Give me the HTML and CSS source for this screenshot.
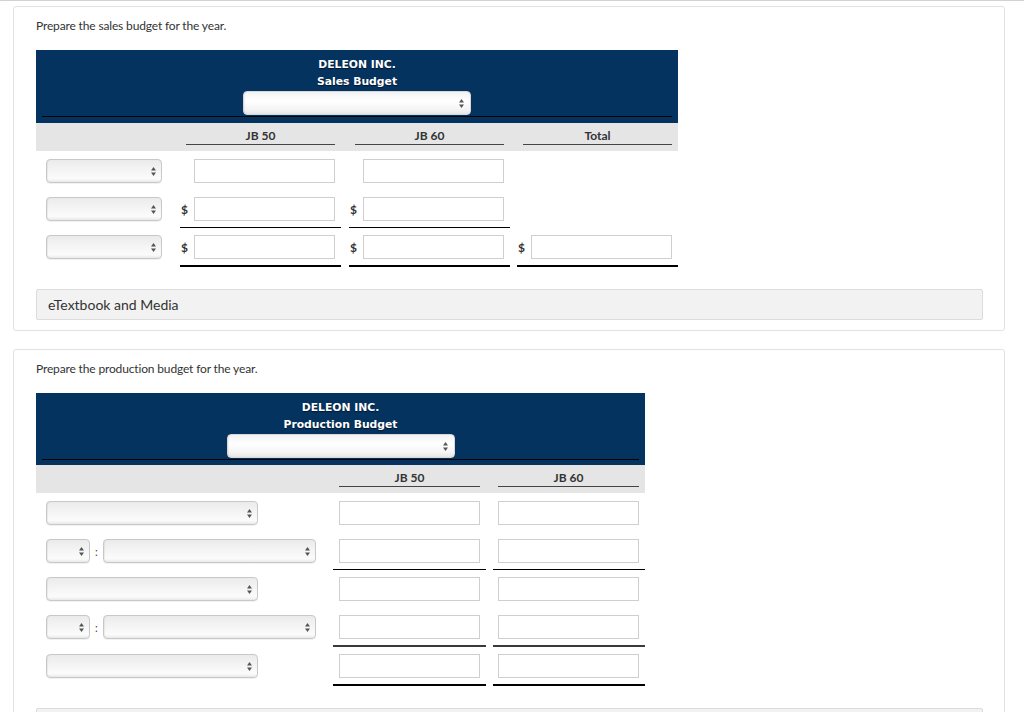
FILE: index.html
```html
<!DOCTYPE html>
<html>
<head>
<meta charset="utf-8">
<link rel="stylesheet" href="styles.css">
</head>
<body>
<div class="card">
  <p class="prompt">Prepare the sales budget for the year.</p>
  <div class="budget sales">
    <div class="bhead">
      <div class="title">DELEON INC.<br>Sales Budget</div>
      <div class="hsel-wrap">
        <div class="sel hsel"><svg class="arr" width="5" height="9" viewBox="0 0 5 9"><polygon points="0,3.6 2.5,0 5,3.6"/><polygon points="0,5.4 2.5,9 5,5.4"/></svg></div>
      </div>
    </div>
    <div class="colrow scols">
      <div></div>
      <div class="lab">JB 50</div>
      <div class="lab">JB 60</div>
      <div class="lab">Total</div>
    </div>
    <div class="brow scols first">
      <div class="selcell"><div class="sel ssel"><svg class="arr" width="5" height="9" viewBox="0 0 5 9"><polygon points="0,3.6 2.5,0 5,3.6"/><polygon points="0,5.4 2.5,9 5,5.4"/></svg></div></div>
      <div class="c"><span class="dollar"></span><div class="inp"></div></div>
      <div class="c"><span class="dollar"></span><div class="inp"></div></div>
      <div></div>
    </div>
    <div class="brow scols">
      <div class="selcell"><div class="sel ssel"><svg class="arr" width="5" height="9" viewBox="0 0 5 9"><polygon points="0,3.6 2.5,0 5,3.6"/><polygon points="0,5.4 2.5,9 5,5.4"/></svg></div></div>
      <div class="c line"><span class="dollar">$</span><div class="inp"></div></div>
      <div class="c line"><span class="dollar">$</span><div class="inp"></div></div>
      <div></div>
    </div>
    <div class="brow scols">
      <div class="selcell"><div class="sel ssel"><svg class="arr" width="5" height="9" viewBox="0 0 5 9"><polygon points="0,3.6 2.5,0 5,3.6"/><polygon points="0,5.4 2.5,9 5,5.4"/></svg></div></div>
      <div class="c thick"><span class="dollar">$</span><div class="inp"></div></div>
      <div class="c thick"><span class="dollar">$</span><div class="inp"></div></div>
      <div class="c thick"><span class="dollar">$</span><div class="inp"></div></div>
    </div>
  </div>
  <div class="media">eTextbook and Media</div>
</div>

<div class="card">
  <p class="prompt">Prepare the production budget for the year.</p>
  <div class="budget prod">
    <div class="bhead">
      <div class="title">DELEON INC.<br>Production Budget</div>
      <div class="hsel-wrap">
        <div class="sel hsel"><svg class="arr" width="5" height="9" viewBox="0 0 5 9"><polygon points="0,3.6 2.5,0 5,3.6"/><polygon points="0,5.4 2.5,9 5,5.4"/></svg></div>
      </div>
    </div>
    <div class="colrow pcols">
      <div></div>
      <div class="lab">JB 50</div>
      <div class="lab">JB 60</div>
    </div>
    <div class="brow pcols first">
      <div class="selcell"><div class="sel wsel"><svg class="arr" width="5" height="9" viewBox="0 0 5 9"><polygon points="0,3.6 2.5,0 5,3.6"/><polygon points="0,5.4 2.5,9 5,5.4"/></svg></div></div>
      <div class="c"><div class="inp"></div></div>
      <div class="c"><div class="inp"></div></div>
    </div>
    <div class="brow pcols">
      <div class="selcell"><div class="sel tsel"><svg class="arr" width="5" height="9" viewBox="0 0 5 9"><polygon points="0,3.6 2.5,0 5,3.6"/><polygon points="0,5.4 2.5,9 5,5.4"/></svg></div><span class="colon">:</span><div class="sel w2sel"><svg class="arr" width="5" height="9" viewBox="0 0 5 9"><polygon points="0,3.6 2.5,0 5,3.6"/><polygon points="0,5.4 2.5,9 5,5.4"/></svg></div></div>
      <div class="c line"><div class="inp"></div></div>
      <div class="c line"><div class="inp"></div></div>
    </div>
    <div class="brow pcols">
      <div class="selcell"><div class="sel wsel"><svg class="arr" width="5" height="9" viewBox="0 0 5 9"><polygon points="0,3.6 2.5,0 5,3.6"/><polygon points="0,5.4 2.5,9 5,5.4"/></svg></div></div>
      <div class="c"><div class="inp"></div></div>
      <div class="c"><div class="inp"></div></div>
    </div>
    <div class="brow pcols">
      <div class="selcell"><div class="sel tsel"><svg class="arr" width="5" height="9" viewBox="0 0 5 9"><polygon points="0,3.6 2.5,0 5,3.6"/><polygon points="0,5.4 2.5,9 5,5.4"/></svg></div><span class="colon">:</span><div class="sel w2sel"><svg class="arr" width="5" height="9" viewBox="0 0 5 9"><polygon points="0,3.6 2.5,0 5,3.6"/><polygon points="0,5.4 2.5,9 5,5.4"/></svg></div></div>
      <div class="c line2"><div class="inp"></div></div>
      <div class="c line2"><div class="inp"></div></div>
    </div>
    <div class="brow pcols">
      <div class="selcell"><div class="sel wsel"><svg class="arr" width="5" height="9" viewBox="0 0 5 9"><polygon points="0,3.6 2.5,0 5,3.6"/><polygon points="0,5.4 2.5,9 5,5.4"/></svg></div></div>
      <div class="c thick"><div class="inp"></div></div>
      <div class="c thick"><div class="inp"></div></div>
    </div>
  </div>
  <div class="media">eTextbook and Media</div>
</div>
</body>
</html>
```

FILE: styles.css
```css
html, body {
  background: #fff;
}
body {
  margin: 0;
  border-top: 1px solid #d2d2d2;
  padding: 5px 19px 0 13px;
  font-family: Lato, "Open Sans", sans-serif;
  color: #333;
  overflow: hidden;
}
.card {
  border: 1px solid #e2e2e2;
  border-radius: 3px;
  padding: 11px 21px 10px 22px;
  margin-bottom: 18px;
}
.prompt {
  margin: 0 0 16px;
  font-size: 12px;
  line-height: 16px;
  letter-spacing: -0.15px;
  color: #333;
}
.budget.sales { width: 642px; }
.budget.prod { width: 609px; }

.bhead {
  background: #043360;
  padding: 6px 6px 6px;
}
.prod .bhead { padding-bottom: 5px; }
.title {
  text-align: center;
  color: #fff;
  font-family: "DejaVu Sans", Verdana, sans-serif;
  font-weight: bold;
  font-size: 10.8px;
  line-height: 17px;
  text-shadow: 0 1px 1px rgba(0,0,0,0.6);
}
.hsel-wrap {
  display: flex;
  justify-content: center;
  padding: 1px 0 1px;
  border-bottom: 1px solid #000;
}
.sel {
  box-sizing: border-box;
  height: 24px;
  border: 1px solid #c8c8c8;
  border-radius: 4px;
  background: linear-gradient(#ebebeb, #f6f6f6 55%, #fbfbfb 85%, #e9e9e9);
  box-shadow: inset 1px 0 1px rgba(0,0,0,0.06), 0 1px 0 rgba(0,0,0,0.05);
  display: flex;
  align-items: center;
  justify-content: flex-end;
  padding-right: 5px;
}
.hsel {
  width: 228px;
  background: linear-gradient(#f3f3f3, #ffffff 40%, #f4f4f4 80%, #e6e6e6);
  border-color: #d8d8d8;
  padding-right: 6px;
}
.arr polygon { fill: #555; }
.ssel { width: 116px; }
.wsel { width: 212px; }
.tsel { width: 44px; }
.w2sel { width: 213px; }
.colon {
  width: 13px;
  text-align: center;
  font-size: 11px;
  color: #444;
}

.scols {
  display: grid;
  grid-template-columns: 144px 169px 168px 161px;
}
.pcols {
  display: grid;
  grid-template-columns: 297px 160px 152px;
}
.colrow {
  background: #e5e5e5;
  height: 28px;
}
.lab {
  width: 149px;
  margin: 4px 0 0 6px;
  height: 17px;
  border-bottom: 1px solid #444;
  font-size: 12px;
  font-weight: bold;
  line-height: 17px;
  text-align: center;
  color: #333;
}
.pcols .lab { width: 141px; }
.pcols .lab:last-child { margin-left: 5px; }

.brow { align-items: start; }
.selcell {
  display: flex;
  align-items: center;
  padding: 7px 0 0 10px;
}
.c {
  display: flex;
  align-items: center;
  width: 161px;
  box-sizing: border-box;
  padding: 7px 0 6px;
  border-bottom: 1px solid transparent;
}
.first .c, .first .selcell { padding-top: 8px; }
.pcols .c { width: 153px; padding-left: 6px; }
.pcols .c:last-child { width: 152px; padding-left: 5px; }
.c.line { border-bottom: 1px solid #000; }
.c.line2 { border-bottom: 2px solid #3a3a3a; padding-bottom: 6px; }
.c.thick { border-bottom: 2px solid #000; }
.dollar {
  width: 14px;
  flex: none;
  font-size: 12px;
  font-weight: bold;
  color: #333;
  padding-left: 1px;
  box-sizing: border-box;
}
.inp {
  box-sizing: border-box;
  width: 141px;
  height: 24px;
  border: 1px solid #cfcfcf;
  background: #fff;
}
.media {
  margin-top: 22px;
  height: 31px;
  box-sizing: border-box;
  border: 1px solid #dcdcdc;
  border-radius: 2px;
  background: #f2f2f2;
  padding-left: 11px;
  font-size: 14px;
  line-height: 29px;
  color: #333;
}
```
